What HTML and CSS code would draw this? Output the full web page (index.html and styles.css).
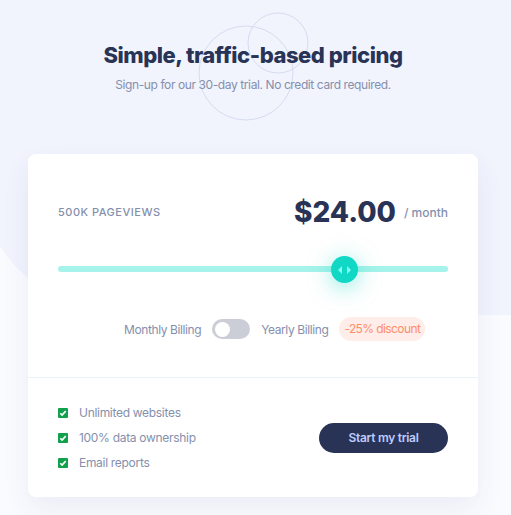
FILE: index.html
```html
<!DOCTYPE html>
<html lang="en">
<head>
    <meta charset="utf-8" />
    <title>Interactive pricing component</title>
	<link rel="stylesheet" href="styles.css">
</head>
<body>
	<div class="page">
		<header class="intro">
			<svg class="circles" width="112" height="110" viewBox="0 0 112 110">
				<circle cx="48" cy="61" r="47" fill="none" stroke="#d5dcf1" stroke-width="1"/>
				<circle cx="80" cy="31" r="30" fill="none" stroke="#d5dcf1" stroke-width="1"/>
			</svg>
			<h1>Simple, traffic-based pricing</h1>
			<p>Sign-up for our 30-day trial. No credit card required.</p>
		</header>

		<div class="card">
			<div class="card-top">
				<div class="price-row">
					<span class="views">500K Pageviews</span>
					<div class="price">
						<strong>$24.00</strong>
						<span>/ month</span>
					</div>
				</div>

				<div class="slider">
					<div class="track"></div>
					<div class="thumb">
						<svg width="13" height="8" viewBox="0 0 13 8">
							<path d="M4 0v8L0 4z" fill="#80fff3"/>
							<path d="M9 0v8l4-4z" fill="#80fff3"/>
						</svg>
					</div>
				</div>

				<div class="billing">
					<span>Monthly Billing</span>
					<span class="toggle"><span class="knob"></span></span>
					<span>Yearly Billing</span>
					<span class="discount">-25% discount</span>
				</div>
			</div>

			<div class="card-bottom">
				<ul class="features">
					<li><span class="check"></span>Unlimited websites</li>
					<li><span class="check"></span>100% data ownership</li>
					<li><span class="check"></span>Email reports</li>
				</ul>
				<button class="trial">Start my trial</button>
			</div>
		</div>
	</div>
</body>
</html>
```

FILE: styles.css
```css
body
{
	margin: 0;
	background-color: #fafbff;
	font-family: "Inter", "Noto Sans", sans-serif;
	min-height: 515px;
	position: relative;
}

body::before
{
	content: "";
	position: absolute;
	top: 0;
	left: -24px;
	right: 0;
	height: 315px;
	background-color: #f1f4fd;
	border-bottom-left-radius: 150px;
}

.page
{
	position: relative;
	width: 506px;
	padding-top: 40px;
}

.intro
{
	position: relative;
	text-align: center;
}

.circles
{
	position: absolute;
	top: -28px;
	left: 50%;
	margin-left: -55px;
}

h1
{
	position: relative;
	margin: 0;
	font-size: 22px;
	line-height: 30px;
	font-weight: 800;
	letter-spacing: -0.45px;
	color: #293356;
}

.intro p
{
	position: relative;
	margin: 7px 0 0;
	font-size: 12px;
	line-height: 16px;
	letter-spacing: -0.4px;
	color: #858fad;
}

.card
{
	width: 450px;
	margin: 61px auto 0;
	background-color: white;
	border-radius: 8px;
	box-shadow: 0 12px 28px rgba(40, 50, 110, 0.07);
}

.card-top
{
	padding: 40px 30px 0;
	height: 183px;
	border-bottom: 1px solid #ecf0fb;
}

.price-row
{
	display: flex;
	justify-content: space-between;
	align-items: center;
	height: 36px;
}

.views
{
	font-size: 11px;
	font-weight: 500;
	letter-spacing: 0.5px;
	text-transform: uppercase;
	color: #858fad;
}

.price
{
	display: flex;
	align-items: center;
	gap: 8px;
}

.price strong
{
	font-size: 28px;
	font-weight: 800;
	color: #293356;
}

.price span
{
	font-size: 12px;
	font-weight: 500;
	color: #858fad;
}

.slider
{
	position: relative;
	height: 27px;
	margin-top: 25px;
}

.track
{
	position: absolute;
	top: 11px;
	left: 0;
	right: 0;
	height: 6px;
	border-radius: 3px;
	background-color: #a5f3eb;
}

.thumb
{
	position: absolute;
	top: 1px;
	left: calc(75% - 20px);
	width: 27px;
	height: 27px;
	border-radius: 50%;
	background-color: #10d8c4;
	box-shadow: 0 4px 22px rgba(16, 216, 196, 0.5);
	display: flex;
	align-items: center;
	justify-content: center;
}

.billing
{
	display: flex;
	align-items: center;
	gap: 11px;
	padding-left: 66px;
	margin-top: 35px;
	font-size: 12px;
	letter-spacing: -0.4px;
	white-space: nowrap;
	color: #858fad;
}

.toggle
{
	flex-shrink: 0;
	width: 38px;
	height: 20px;
	border-radius: 10px;
	background-color: #cbced6;
	display: flex;
	align-items: center;
	padding: 0 3px;
	box-sizing: border-box;
}

.knob
{
	width: 15px;
	height: 15px;
	border-radius: 50%;
	background-color: white;
}

.discount
{
	font-size: 12px;
	letter-spacing: -0.6px;
	color: #ff8d68;
	background-color: #feede8;
	border-radius: 12px;
	padding: 4px 5px;
	line-height: 16px;
}

.card-bottom
{
	display: flex;
	justify-content: space-between;
	align-items: center;
	padding: 22px 30px 22px;
}

.features
{
	list-style: none;
	margin: 0;
	padding: 0;
}

.features li
{
	display: flex;
	align-items: center;
	height: 25px;
	font-size: 12px;
	letter-spacing: -0.3px;
	color: #858fad;
}

.check
{
	width: 10px;
	height: 10px;
	margin-right: 11px;
	border-radius: 1px;
	background: #11a04b url("data:image/svg+xml,%3Csvg xmlns='http://www.w3.org/2000/svg' width='10' height='10'%3E%3Cpath d='M2.3 5.2l1.8 1.9 3.6-4' fill='none' stroke='white' stroke-width='1.6'/%3E%3C/svg%3E") no-repeat center;
}

.trial
{
	width: 129px;
	height: 30px;
	border: none;
	border-radius: 15px;
	background-color: #293356;
	color: #bdccff;
	font-family: inherit;
	font-size: 12px;
	font-weight: 600;
	letter-spacing: -0.3px;
	cursor: pointer;
}
```
